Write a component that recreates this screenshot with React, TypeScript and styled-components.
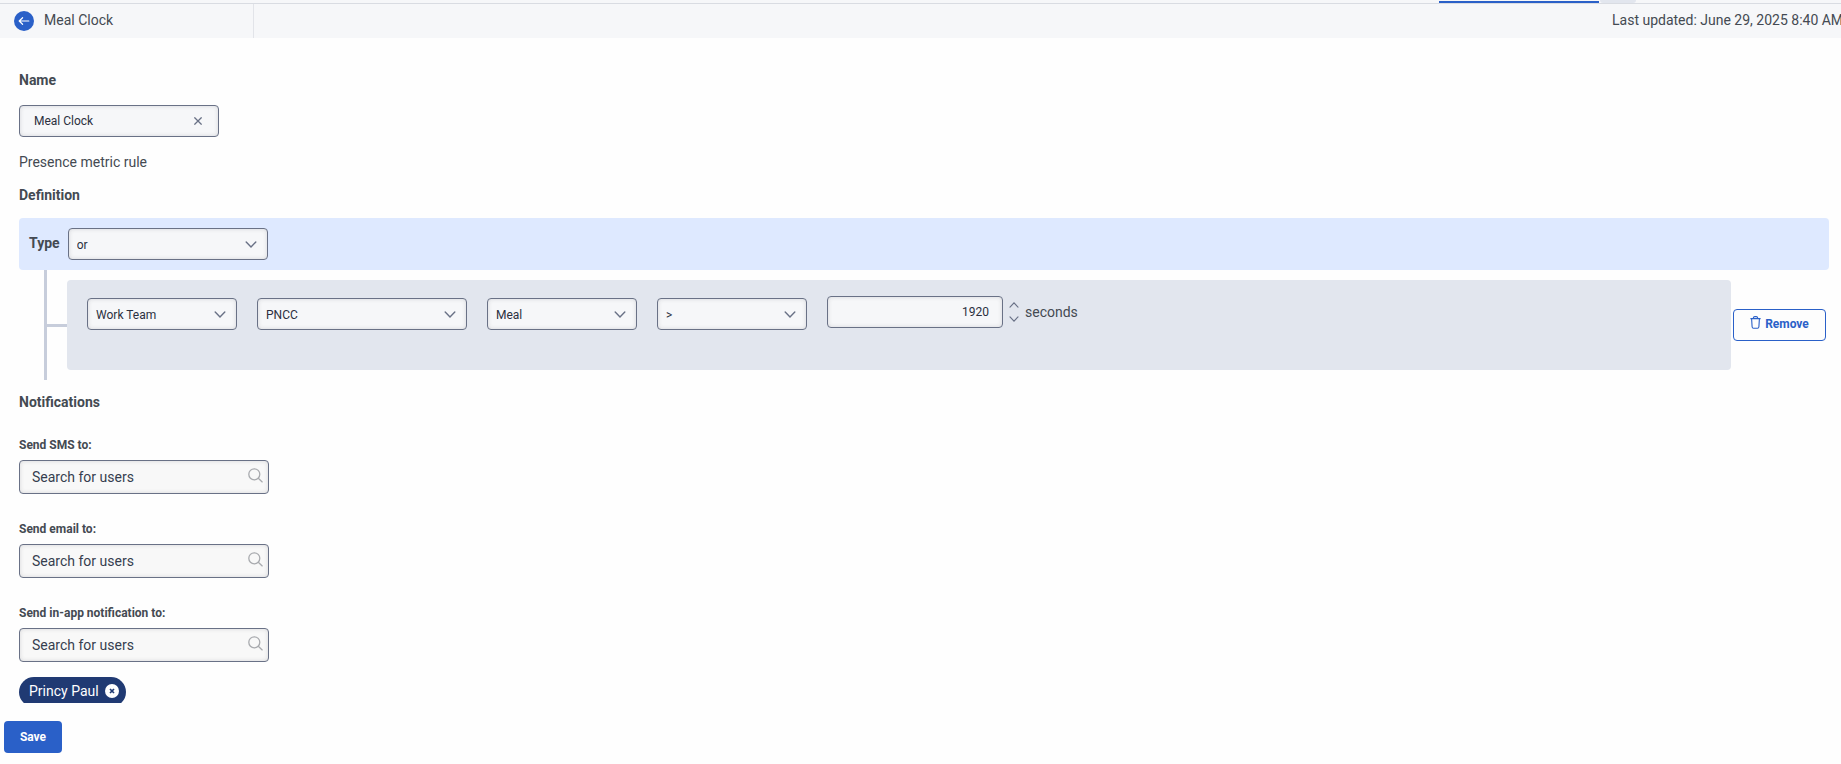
import React, { useState } from 'react';
import styled, { createGlobalStyle } from 'styled-components';

const GlobalStyle = createGlobalStyle`
  *, *::before, *::after { box-sizing: border-box; }
  body {
    margin: 0;
    background: #fefefe;
    color: #444a52;
    font-family: Roboto, sans-serif;
    font-size: 14px;
    line-height: 20px;
  }
  button, input, select { font-family: inherit; margin: 0; }
`;

const Page = styled.div`
  display: flex;
  flex-direction: column;
  height: 100vh;
  overflow: hidden;
`;

const TabStrip = styled.div`
  display: flex;
  justify-content: flex-end;
  flex: none;
  height: 4px;
  padding-right: 205px;
  background: #f6f7f9;
  border-bottom: 1px solid #d9dce2;
`;

const ActiveTab = styled.div`
  width: 160px;
  height: 2px;
  margin: 1px 1px 0 0;
  background: #2a60c8;
`;

const TabButtonEdge = styled.div`
  width: 36px;
  border-radius: 0 0 4px 4px;
  background: #e2e6ee;
`;

const Header = styled.header`
  display: flex;
  align-items: stretch;
  justify-content: space-between;
  flex: none;
  height: 34px;
  background: #f6f7f9;
`;

const TitleGroup = styled.div`
  display: flex;
  align-items: center;
  gap: 10px;
  width: 254px;
  padding-left: 14px;
  border-right: 1px solid #e2e4e9;
`;

const PageTitle = styled.h1`
  margin: 0 0 2px;
  font-size: 14px;
  font-weight: 400;
`;

const BackButton = styled.button`
  display: grid;
  place-items: center;
  width: 20px;
  height: 20px;
  padding: 0;
  border: 0;
  border-radius: 50%;
  background: #2a60c8;
  color: #fff;
`;

const Updated = styled.div`
  width: 229px;
  padding-top: 6px;
  overflow: hidden;
  white-space: nowrap;
`;

const Content = styled.main`
  flex: 1;
  min-height: 0;
  overflow: auto;
  scrollbar-width: none;
  padding: 32px 12px 0 19px;
`;

const Section = styled.section`
  display: flex;
  flex-direction: column;
  align-items: flex-start;
`;

const Heading = styled.h2`
  margin: 0;
  font-size: 14px;
  line-height: 20px;
  font-weight: 700;
`;

const FieldHeading = styled.label`
  margin-bottom: 15px;
  font-weight: 700;
`;

const Description = styled.p`
  margin: 15px 0 13px;
`;

const Field = styled.div<{ $width: number }>`
  position: relative;
  flex: none;
  width: ${(p) => p.$width}px;
`;

const controlLook = `
  display: block;
  width: 100%;
  height: 32px;
  border: 1px solid #697186;
  border-radius: 4px;
  background: #f6f7f9;
  box-shadow: inset 0 0 4px rgba(60, 60, 70, 0.18);
  color: #2b3040;
  font-size: 12px;
  outline: none;
`;

const NameInput = styled.input`
  ${controlLook}
  padding: 0 40px 0 14px;
`;

const Select = styled.select`
  ${controlLook}
  appearance: none;
  padding: 2px 32px 0 8px;
`;

const NumberInput = styled.input`
  ${controlLook}
  padding: 0 13px 0 8px;
  text-align: right;
  appearance: textfield;
  &::-webkit-inner-spin-button { appearance: none; margin: 0; }
`;

const SearchInput = styled.input`
  ${controlLook}
  height: 34px;
  padding: 0 34px 0 12px;
  background: #f8f8f8;
  font-size: 14px;
  &::placeholder { color: #363e4f; opacity: 1; }
`;

const Adornment = styled.span<{ $right: number; $lift?: number }>`
  position: absolute;
  top: 0;
  right: ${(p) => p.$right}px;
  bottom: ${(p) => p.$lift ?? 0}px;
  display: flex;
  align-items: center;
  color: #697186;
  pointer-events: none;
`;

const IconButton = styled.button`
  display: grid;
  place-items: center;
  padding: 0;
  border: 0;
  background: none;
  color: inherit;
  pointer-events: auto;
`;

const TypeBar = styled.div`
  display: flex;
  align-items: center;
  align-self: stretch;
  gap: 8px;
  height: 52px;
  margin-top: 13px;
  padding: 0 10px;
  border-radius: 4px;
  background: #dee9ff;
`;

const TypeLabel = styled.label`
  padding-bottom: 2px;
  font-weight: 700;
`;

const Rule = styled.div`
  display: flex;
  align-items: center;
  align-self: stretch;
  height: 110px;
  margin-left: 25px;
  padding-right: 3px;
  border-left: 3px solid #c7cddb;
`;

const Connector = styled.span`
  flex: none;
  width: 20px;
  height: 3px;
  background: #c7cddb;
`;

const Condition = styled.div`
  display: flex;
  align-items: flex-start;
  flex: 1;
  gap: 20px;
  height: 90px;
  margin-right: 2px;
  padding: 16px 20px;
  border-radius: 4px;
  background: #e2e6ee;
`;

const SelectSlot = styled.div`
  padding-top: 2px;
`;

const Amount = styled.div`
  display: flex;
  align-items: center;
  gap: 6px;
`;

const Stepper = styled.div`
  display: flex;
  flex-direction: column;
  gap: 8px;
  color: #697186;
`;

const RemoveButton = styled.button`
  display: flex;
  align-items: center;
  justify-content: center;
  gap: 4px;
  width: 93px;
  height: 32px;
  padding: 0 0 2px;
  border: 1px solid #2a60c8;
  border-radius: 4px;
  background: #fdfdfd;
  color: #2a60c8;
  font-size: 12px;
  font-weight: 700;
  svg { margin-bottom: 3px; }
`;

const Notifications = styled(Section)`
  margin-top: 12px;
`;

const Recipient = styled.div`
  display: flex;
  flex-direction: column;
  gap: 7px;
  padding-top: 25px;
  & + & { padding-top: 27px; }
`;

const RecipientLabel = styled.label`
  font-size: 12px;
  line-height: 16px;
  font-weight: 700;
`;

const Chip = styled.span`
  display: flex;
  align-items: center;
  gap: 6px;
  height: 30px;
  margin-top: 15px;
  padding: 0 7px 2px 10px;
  border-radius: 15px;
  background: #203a73;
  color: #fff;
`;

const Footer = styled.footer`
  flex: none;
  padding: 18px 4px 11px;
`;

const SaveButton = styled.button`
  display: block;
  width: 58px;
  height: 32px;
  padding: 0;
  border: 0;
  border-radius: 4px;
  background: #2a60c8;
  color: #fff;
  font-size: 12px;
  font-weight: 700;
`;

const Chevron = ({ small = false, up = false }: { small?: boolean; up?: boolean }) => (
  <svg
    width={small ? 10 : 12}
    height={small ? 6 : 7}
    viewBox="0 0 12 7"
    fill="none"
    stroke="currentColor"
    strokeWidth="1.4"
    strokeLinecap="round"
  >
    <path d={up ? 'M1.2 6 6 1l4.8 5' : 'M1.2 1 6 6l4.8-5'} />
  </svg>
);

const ArrowLeft = () => (
  <svg width="12" height="10" viewBox="0 0 12 10" fill="none" stroke="currentColor" strokeWidth="1.2" strokeLinecap="round" strokeLinejoin="round">
    <path d="M10.8 5H1.2M4.6 1.7 1.2 5l3.4 3.3" />
  </svg>
);

const Cross = () => (
  <svg width="8" height="8" viewBox="0 0 8 8" fill="none" stroke="currentColor" strokeWidth="1.3">
    <path d="m.4.4 7.2 7.2M7.6.4.4 7.6" />
  </svg>
);

const Magnifier = () => (
  <svg width="15" height="15" viewBox="0 0 15 15" fill="none" stroke="#a9abaf" strokeWidth="1.3" strokeLinecap="round">
    <circle cx="6.3" cy="6.3" r="5.5" />
    <path d="m10.3 10.3 3.9 3.6" />
  </svg>
);

const Trash = () => (
  <svg width="11" height="13" viewBox="0 0 11 13" fill="none" stroke="currentColor" strokeWidth="1.1">
    <path d="M.4 2.6h10.2M3.2 2.4C3.4 1.1 4 .6 4.8.6h1.4c.8 0 1.4.5 1.6 1.8M1.6 2.8l.5 8c.1.9.5 1.4 1.3 1.4h4.2c.8 0 1.2-.5 1.3-1.4l.5-8" />
  </svg>
);

const RoundCross = () => (
  <svg width="14" height="14" viewBox="0 0 14 14">
    <circle cx="7" cy="7" r="7" fill="#fff" />
    <path d="m5 5 4 4M9 5 5 9" stroke="#203a73" strokeWidth="1.7" />
  </svg>
);

function Dropdown({ id, label, width, options }: { id?: string; label?: string; width: number; options: string[] }) {
  return (
    <Field $width={width}>
      <Select id={id} aria-label={label}>
        {options.map((o) => (
          <option key={o}>{o}</option>
        ))}
      </Select>
      <Adornment $right={11}>
        <Chevron />
      </Adornment>
    </Field>
  );
}

const conditions = [
  { label: 'Scope', width: 150, options: ['Work Team'] },
  { label: 'Team', width: 210, options: ['PNCC'] },
  { label: 'Presence', width: 150, options: ['Meal'] },
  { label: 'Operator', width: 150, options: ['>'] },
];

const recipients = [
  { id: 'sms', label: 'Send SMS to:' },
  { id: 'email', label: 'Send email to:' },
  { id: 'in-app', label: 'Send in-app notification to:' },
];

export default function App() {
  const [name, setName] = useState('Meal Clock');
  const [seconds, setSeconds] = useState(1920);

  return (
    <>
      <GlobalStyle />
      <Page>
        <TabStrip>
          <ActiveTab />
          <TabButtonEdge />
        </TabStrip>
        <Header>
          <TitleGroup>
            <BackButton aria-label="Back">
              <ArrowLeft />
            </BackButton>
            <PageTitle>Meal Clock</PageTitle>
          </TitleGroup>
          <Updated>Last updated: June 29, 2025 8:40 AM</Updated>
        </Header>
        <Content>
          <Section>
            <FieldHeading htmlFor="name">Name</FieldHeading>
            <Field $width={200}>
              <NameInput id="name" value={name} onChange={(e) => setName(e.target.value)} />
              <Adornment $right={17}>
                <IconButton aria-label="Clear name" onClick={() => setName('')}>
                  <Cross />
                </IconButton>
              </Adornment>
            </Field>
            <Description>Presence metric rule</Description>
          </Section>
          <Section>
            <Heading>Definition</Heading>
            <TypeBar>
              <TypeLabel htmlFor="type">Type</TypeLabel>
              <Dropdown id="type" width={200} options={['or', 'and']} />
            </TypeBar>
            <Rule>
              <Connector />
              <Condition>
                {conditions.map((c) => (
                  <SelectSlot key={c.label}>
                    <Dropdown {...c} />
                  </SelectSlot>
                ))}
                <Amount>
                  <Field $width={176}>
                    <NumberInput
                      type="number"
                      aria-label="Seconds"
                      value={seconds}
                      onChange={(e) => setSeconds(Number(e.target.value))}
                    />
                  </Field>
                  <Stepper>
                    <IconButton aria-label="Increase" onClick={() => setSeconds(seconds + 1)}>
                      <Chevron small up />
                    </IconButton>
                    <IconButton aria-label="Decrease" onClick={() => setSeconds(seconds - 1)}>
                      <Chevron small />
                    </IconButton>
                  </Stepper>
                  <span>seconds</span>
                </Amount>
              </Condition>
              <RemoveButton>
                <Trash />
                Remove
              </RemoveButton>
            </Rule>
          </Section>
          <Notifications>
            <Heading>Notifications</Heading>
            {recipients.map((r) => (
              <Recipient key={r.id}>
                <RecipientLabel htmlFor={r.id}>{r.label}</RecipientLabel>
                <Field $width={250}>
                  <SearchInput id={r.id} placeholder="Search for users" />
                  <Adornment $right={6} $lift={4}>
                    <Magnifier />
                  </Adornment>
                </Field>
              </Recipient>
            ))}
            <Chip>
              Princy Paul
              <IconButton aria-label="Remove Princy Paul">
                <RoundCross />
              </IconButton>
            </Chip>
          </Notifications>
        </Content>
        <Footer>
          <SaveButton>Save</SaveButton>
        </Footer>
      </Page>
    </>
  );
}
